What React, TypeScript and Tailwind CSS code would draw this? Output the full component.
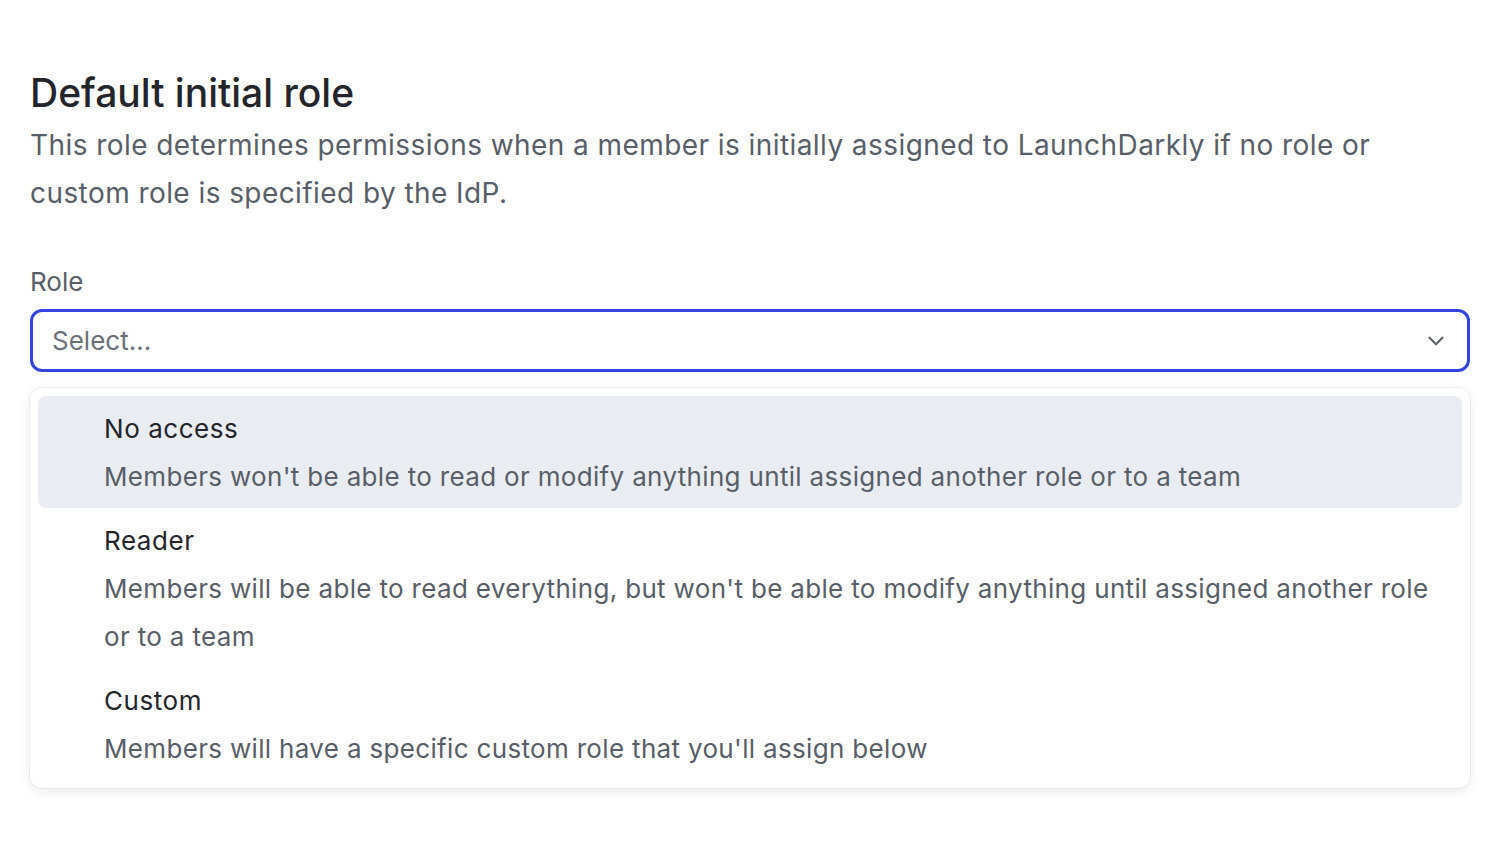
import { ChevronDown } from "lucide-react";

const options = [
  {
    name: "No access",
    desc: "Members won't be able to read or modify anything until assigned another role or to a team",
  },
  {
    name: "Reader",
    desc: "Members will be able to read everything, but won't be able to modify anything until assigned another role or to a team",
  },
  {
    name: "Custom",
    desc: "Members will have a specific custom role that you'll assign below",
  },
];

export default function App() {
  return (
    <main className="min-h-screen bg-white px-[30px] pt-[66px] font-['Inter',sans-serif]">
      <h1 className="text-[39px] leading-[54px] font-medium text-[#23252b]">Default initial role</h1>
      <p className="text-[28px] leading-[48px] text-[#585e68] mt-[1px] tracking-[0.43px]">
        This role determines permissions when a member is initially assigned to LaunchDarkly if no role or custom role is
        specified by the IdP.
      </p>

      <label className="block mt-[45px] text-[26px] leading-[40px] text-[#585e68]">Role</label>
      <div className="mt-[7px] h-[63px] rounded-[12px] border-[3px] border-[#3344dd] flex items-center justify-between pl-[19px] pr-[18px]">
        <span className="text-[26px] text-[#6b717b]">Select...</span>
        <ChevronDown className="w-[26px] h-[26px] text-[#5f646c]" strokeWidth={2} />
      </div>

      <div className="mt-[16px] rounded-[12px] bg-white p-[8px] shadow-[0_0_0_1px_rgba(0,0,0,0.04),0_3px_12px_rgba(0,0,0,0.09)]">
        {options.map((o, i) => (
          <div
            key={o.name}
            className={`rounded-[8px] pl-[66px] pr-[24px] pt-[9px] pb-[7px] ${i === 0 ? "bg-[#e9edf1]" : ""}`}
          >
            <div className="text-[26px] leading-[48px] text-[#23252b] tracking-[0.55px]">{o.name}</div>
            <div className="text-[26px] leading-[48px] text-[#585e68] tracking-[0.33px]">{o.desc}</div>
          </div>
        ))}
      </div>
    </main>
  );
}
